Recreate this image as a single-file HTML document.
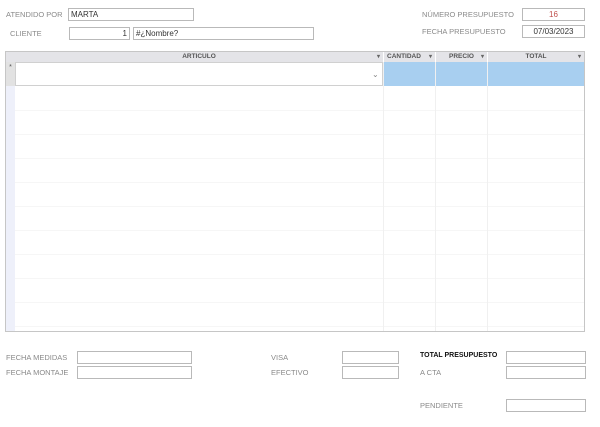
<!DOCTYPE html>
<html><head><meta charset="utf-8"><style>
body{margin:0;width:600px;height:427px;background:#fff;position:relative;font-family:"Liberation Sans",sans-serif;overflow:hidden}
.a{position:absolute}
.l{position:absolute;font-size:7.5px;color:#8a8a8a;white-space:nowrap}
.b{position:absolute;border:1px solid #b9b9b9;background:#fff;box-sizing:border-box;font-size:8px;color:#333;line-height:11px}
.h{position:absolute;top:52px;height:10px;font-size:6.5px;font-weight:bold;color:#555;line-height:10px;text-align:center}
.dd{position:absolute;top:0;right:3px;font-size:6px;color:#666}
</style></head><body>
<div class="l" style="left:6px;top:10px">ATENDIDO POR</div>
<div class="b" style="left:68px;top:8px;width:126px;height:13px;padding-left:2px">MARTA</div>
<div class="l" style="left:10px;top:29px">CLIENTE</div>
<div class="b" style="left:69px;top:27px;width:61px;height:13px;text-align:right;padding-right:2px">1</div>
<div class="b" style="left:133px;top:27px;width:181px;height:13px;padding-left:2px">#¿Nombre?</div>
<div class="l" style="left:422px;top:10px">NÚMERO PRESUPUESTO</div>
<div class="b" style="left:522px;top:8px;width:63px;height:13px;text-align:center;color:#c0504d">16</div>
<div class="l" style="left:422px;top:27px">FECHA PRESUPUESTO</div>
<div class="b" style="left:522px;top:25px;width:63px;height:13px;text-align:center">07/03/2023</div>

<div class="a" style="left:5px;top:51px;width:580px;height:281px;border:1px solid #c6c6c6;box-sizing:border-box;background:#fff;
background-image:repeating-linear-gradient(to bottom,transparent 0,transparent 23px,#f6f6f6 23px,#f6f6f6 24px);background-position:0 35px"></div>
<div class="a" style="left:6px;top:52px;width:578px;height:10px;background:#e4e4e8"></div>
<div class="a" style="left:6px;top:62px;width:9px;height:269px;background:#eef0fa"></div>
<div class="a" style="left:6px;top:62px;width:9px;height:24px;background:#e2e2e2;font-size:7px;color:#555;text-align:center;line-height:12px">*</div>
<div class="a" style="left:383px;top:62px;width:201px;height:24px;background:#a8cff0"></div>
<div class="a" style="left:15px;top:62px;width:368px;height:24px;background:#fff;border:1px solid #d0d0d0;box-sizing:border-box"></div>
<div class="a" style="left:372px;top:70px;font-size:8px;color:#888">⌄</div>
<div class="a" style="left:383px;top:52px;width:1px;height:279px;background:#f0f0f0"></div>
<div class="a" style="left:435px;top:52px;width:1px;height:279px;background:#f0f0f0"></div>
<div class="a" style="left:487px;top:52px;width:1px;height:279px;background:#f0f0f0"></div>
<div class="a" style="left:383px;top:52px;width:1px;height:10px;background:#fff"></div>
<div class="a" style="left:435px;top:52px;width:1px;height:10px;background:#fff"></div>
<div class="a" style="left:487px;top:52px;width:1px;height:10px;background:#fff"></div>
<div class="h" style="left:15px;width:368px">ARTICULO<span class="dd">▾</span></div>
<div class="h" style="left:384px;width:51px;text-align:left;padding-left:3px;box-sizing:border-box">CANTIDAD<span class="dd">▾</span></div>
<div class="h" style="left:436px;width:51px">PRECIO<span class="dd">▾</span></div>
<div class="h" style="left:488px;width:96px">TOTAL<span class="dd">▾</span></div>

<div class="l" style="left:6px;top:353px">FECHA MEDIDAS</div>
<div class="b" style="left:77px;top:351px;width:115px;height:13px"></div>
<div class="l" style="left:6px;top:368px">FECHA MONTAJE</div>
<div class="b" style="left:77px;top:366px;width:115px;height:13px"></div>
<div class="l" style="left:271px;top:353px">VISA</div>
<div class="b" style="left:342px;top:351px;width:57px;height:13px"></div>
<div class="l" style="left:271px;top:368px">EFECTIVO</div>
<div class="b" style="left:342px;top:366px;width:57px;height:13px"></div>
<div class="l" style="left:420px;top:352px;color:#111;font-weight:bold;font-size:7px">TOTAL PRESUPUESTO</div>
<div class="b" style="left:506px;top:351px;width:80px;height:13px"></div>
<div class="l" style="left:420px;top:368px">A CTA</div>
<div class="b" style="left:506px;top:366px;width:80px;height:13px"></div>
<div class="l" style="left:420px;top:401px">PENDIENTE</div>
<div class="b" style="left:506px;top:399px;width:80px;height:13px"></div>
</body></html>
